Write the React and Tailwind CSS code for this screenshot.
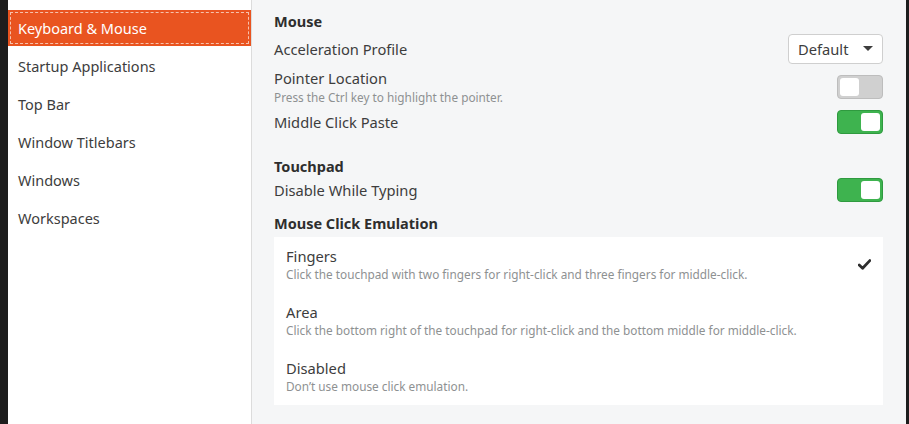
import React from "react";

const font = { fontFamily: '"Noto Sans", "Open Sans", sans-serif' };

function Toggle({ on }) {
  return on ? (
    <div className="w-[46px] h-[24px] rounded-[4px] bg-[#3eb34f] border border-[#2f9a3f] flex items-center justify-end px-[2px]">
      <div className="w-[19px] h-[18px] rounded-[3px] bg-white" />
    </div>
  ) : (
    <div className="w-[46px] h-[24px] rounded-[4px] bg-[#d0d0d0] border border-[#bdbdbd] flex items-center justify-start px-[2px]">
      <div className="w-[19px] h-[18px] rounded-[3px] bg-white" />
    </div>
  );
}

function Row({ title, sub, right, className = "" }) {
  return (
    <div className={"flex items-center justify-between " + className}>
      <div className="flex flex-col">
        <div className="text-[14.7px] leading-[18px] text-[#3d3d3d]">{title}</div>
        {sub && <div className="text-[11.8px] leading-[15px] text-[#8e9192] mt-[3px]">{sub}</div>}
      </div>
      {right}
    </div>
  );
}

function Option({ title, sub, checked }) {
  return (
    <div className="flex items-center justify-between h-[56px] pl-[12px] pr-[12px] pb-[2px]">
      <div className="flex flex-col">
        <div className="text-[14.7px] leading-[20px] text-[#3d3d3d]">{title}</div>
        <div className="text-[11.8px] leading-[16px] text-[#8e9192]">{sub}</div>
      </div>
      {checked && (
        <svg width="13" height="11" viewBox="0 0 13 11">
          <path d="M1.2 6 L4.6 9.3 L11.8 1.6" stroke="#2e2e2e" strokeWidth="2.8" fill="none" strokeLinecap="round" strokeLinejoin="round" />
        </svg>
      )}
    </div>
  );
}

export default function App() {
  const items = ["Startup Applications", "Top Bar", "Window Titlebars", "Windows", "Workspaces"];
  return (
    <div className="w-[909px] h-[424px] flex bg-[#1d1d1d] overflow-hidden" style={font}>
      <div className="w-[8px] shrink-0 bg-[#1d1d1d]" />
      <div className="w-[244px] shrink-0 bg-white border-r border-[#dcdcdc] pt-[10px]">
        <div className="h-[36px] bg-[#e95420] flex items-center p-[2px]">
          <div className="w-full h-full border border-dashed border-[#f6c2ad] flex items-center pl-[7px] pt-[2px] text-[14.5px] text-white">
            Keyboard &amp; Mouse
          </div>
        </div>
        {items.map((t) => (
          <div key={t} className="h-[38px] flex items-center pl-[10px] text-[14.5px] text-[#3d3d3d] pt-[4px]">
            {t}
          </div>
        ))}
      </div>
      <div className="w-[654px] shrink-0 bg-[#f5f6f7] pl-[22px] pr-[23px] pt-[12px]">
        <div className="text-[14.5px] font-bold leading-[18px] text-[#2e2e2e]">Mouse</div>
        <Row
          className="mt-[4px]"
          title="Acceleration Profile"
          right={
            <div className="w-[95px] h-[30px] rounded-[4px] bg-white border border-[#cfcfcf] flex items-center justify-between pl-[9px] pr-[9px] text-[14.7px] text-[#3d3d3d]">
              <span>Default</span>
              <svg width="10" height="6" viewBox="0 0 10 6"><path d="M0 0 L10 0 L5 5 Z" fill="#3d3d3d" /></svg>
            </div>
          }
        />
        <Row className="mt-[5px]" title="Pointer Location" sub="Press the Ctrl key to highlight the pointer." right={<Toggle on={false} />} />
        <Row className="mt-[5px]" title="Middle Click Paste" right={<Toggle on />} />
        <div className="mt-[23px] text-[14.5px] font-bold leading-[18px] text-[#2e2e2e]">Touchpad</div>
        <Row className="mt-[3px]" title="Disable While Typing" right={<Toggle on />} />
        <div className="mt-[12px] text-[14.5px] font-bold leading-[18px] text-[#2e2e2e]">Mouse Click Emulation</div>
        <div className="mt-[5px] bg-white">
          <Option title="Fingers" sub="Click the touchpad with two fingers for right-click and three fingers for middle-click." checked />
          <Option title="Area" sub="Click the bottom right of the touchpad for right-click and the bottom middle for middle-click." />
          <Option title="Disabled" sub="Don’t use mouse click emulation." />
        </div>
      </div>
      <div className="flex-1 bg-[#1d1d1d]" />
    </div>
  );
}
